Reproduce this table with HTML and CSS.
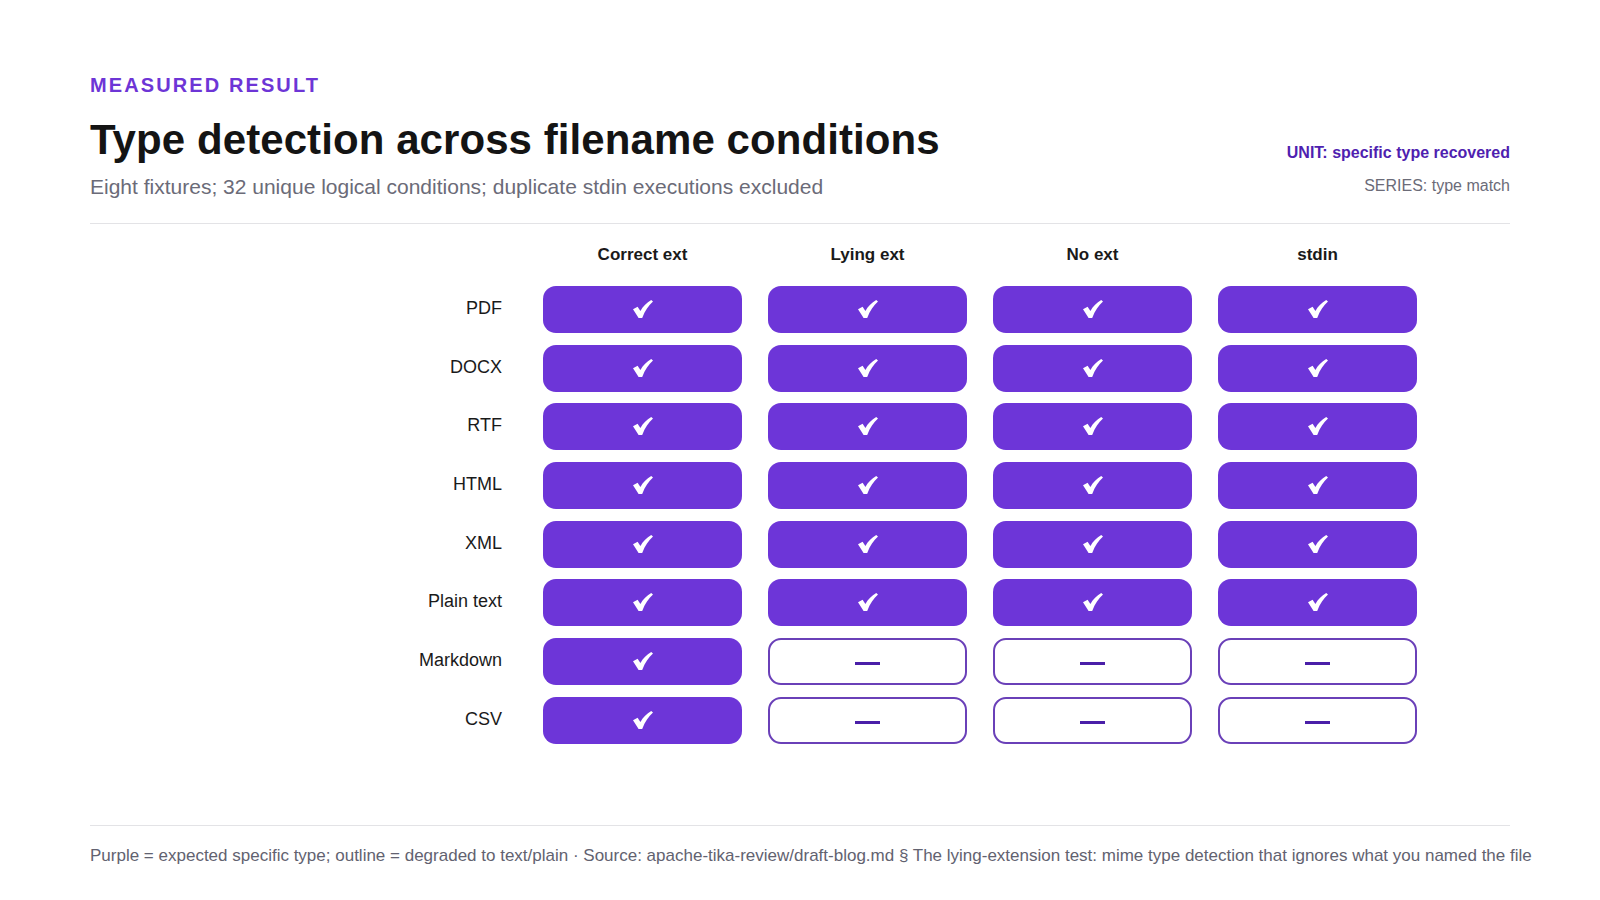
FILE: index.html
```html
<!DOCTYPE html>
<html lang="en">
<head>
<meta charset="utf-8">
<title>Type detection across filename conditions</title>
<link rel="stylesheet" href="styles.css">
</head>
<body>
<div class="page">
  <header class="head">
    <div class="head-left">
      <div class="eyebrow">MEASURED RESULT</div>
      <h1 class="title">Type detection across filename conditions</h1>
      <div class="subtitle">Eight fixtures; 32 unique logical conditions; duplicate stdin executions excluded</div>
    </div>
    <div class="head-right">
      <div class="unit">UNIT: specific type recovered</div>
      <div class="series">SERIES: type match</div>
    </div>
  </header>

  <div class="matrix">
    <div class="corner"></div>
    <div class="colhead">Correct ext</div>
    <div class="colhead">Lying ext</div>
    <div class="colhead">No ext</div>
    <div class="colhead">stdin</div>

    <div class="rowlabel">PDF</div>
    <div class="cell on"><svg class="chk" viewBox="0 0 20 18"><path d="M0 9.2 L4.6 6.8 L7.4 11 C10.2 6.2 13.6 2.6 18.2 0 L20 1.6 C15.6 5.4 12 10.8 9.2 18 L5.6 18 Z"/></svg></div>
    <div class="cell on"><svg class="chk" viewBox="0 0 20 18"><path d="M0 9.2 L4.6 6.8 L7.4 11 C10.2 6.2 13.6 2.6 18.2 0 L20 1.6 C15.6 5.4 12 10.8 9.2 18 L5.6 18 Z"/></svg></div>
    <div class="cell on"><svg class="chk" viewBox="0 0 20 18"><path d="M0 9.2 L4.6 6.8 L7.4 11 C10.2 6.2 13.6 2.6 18.2 0 L20 1.6 C15.6 5.4 12 10.8 9.2 18 L5.6 18 Z"/></svg></div>
    <div class="cell on"><svg class="chk" viewBox="0 0 20 18"><path d="M0 9.2 L4.6 6.8 L7.4 11 C10.2 6.2 13.6 2.6 18.2 0 L20 1.6 C15.6 5.4 12 10.8 9.2 18 L5.6 18 Z"/></svg></div>

    <div class="rowlabel">DOCX</div>
    <div class="cell on"><svg class="chk" viewBox="0 0 20 18"><path d="M0 9.2 L4.6 6.8 L7.4 11 C10.2 6.2 13.6 2.6 18.2 0 L20 1.6 C15.6 5.4 12 10.8 9.2 18 L5.6 18 Z"/></svg></div>
    <div class="cell on"><svg class="chk" viewBox="0 0 20 18"><path d="M0 9.2 L4.6 6.8 L7.4 11 C10.2 6.2 13.6 2.6 18.2 0 L20 1.6 C15.6 5.4 12 10.8 9.2 18 L5.6 18 Z"/></svg></div>
    <div class="cell on"><svg class="chk" viewBox="0 0 20 18"><path d="M0 9.2 L4.6 6.8 L7.4 11 C10.2 6.2 13.6 2.6 18.2 0 L20 1.6 C15.6 5.4 12 10.8 9.2 18 L5.6 18 Z"/></svg></div>
    <div class="cell on"><svg class="chk" viewBox="0 0 20 18"><path d="M0 9.2 L4.6 6.8 L7.4 11 C10.2 6.2 13.6 2.6 18.2 0 L20 1.6 C15.6 5.4 12 10.8 9.2 18 L5.6 18 Z"/></svg></div>

    <div class="rowlabel">RTF</div>
    <div class="cell on"><svg class="chk" viewBox="0 0 20 18"><path d="M0 9.2 L4.6 6.8 L7.4 11 C10.2 6.2 13.6 2.6 18.2 0 L20 1.6 C15.6 5.4 12 10.8 9.2 18 L5.6 18 Z"/></svg></div>
    <div class="cell on"><svg class="chk" viewBox="0 0 20 18"><path d="M0 9.2 L4.6 6.8 L7.4 11 C10.2 6.2 13.6 2.6 18.2 0 L20 1.6 C15.6 5.4 12 10.8 9.2 18 L5.6 18 Z"/></svg></div>
    <div class="cell on"><svg class="chk" viewBox="0 0 20 18"><path d="M0 9.2 L4.6 6.8 L7.4 11 C10.2 6.2 13.6 2.6 18.2 0 L20 1.6 C15.6 5.4 12 10.8 9.2 18 L5.6 18 Z"/></svg></div>
    <div class="cell on"><svg class="chk" viewBox="0 0 20 18"><path d="M0 9.2 L4.6 6.8 L7.4 11 C10.2 6.2 13.6 2.6 18.2 0 L20 1.6 C15.6 5.4 12 10.8 9.2 18 L5.6 18 Z"/></svg></div>

    <div class="rowlabel">HTML</div>
    <div class="cell on"><svg class="chk" viewBox="0 0 20 18"><path d="M0 9.2 L4.6 6.8 L7.4 11 C10.2 6.2 13.6 2.6 18.2 0 L20 1.6 C15.6 5.4 12 10.8 9.2 18 L5.6 18 Z"/></svg></div>
    <div class="cell on"><svg class="chk" viewBox="0 0 20 18"><path d="M0 9.2 L4.6 6.8 L7.4 11 C10.2 6.2 13.6 2.6 18.2 0 L20 1.6 C15.6 5.4 12 10.8 9.2 18 L5.6 18 Z"/></svg></div>
    <div class="cell on"><svg class="chk" viewBox="0 0 20 18"><path d="M0 9.2 L4.6 6.8 L7.4 11 C10.2 6.2 13.6 2.6 18.2 0 L20 1.6 C15.6 5.4 12 10.8 9.2 18 L5.6 18 Z"/></svg></div>
    <div class="cell on"><svg class="chk" viewBox="0 0 20 18"><path d="M0 9.2 L4.6 6.8 L7.4 11 C10.2 6.2 13.6 2.6 18.2 0 L20 1.6 C15.6 5.4 12 10.8 9.2 18 L5.6 18 Z"/></svg></div>

    <div class="rowlabel">XML</div>
    <div class="cell on"><svg class="chk" viewBox="0 0 20 18"><path d="M0 9.2 L4.6 6.8 L7.4 11 C10.2 6.2 13.6 2.6 18.2 0 L20 1.6 C15.6 5.4 12 10.8 9.2 18 L5.6 18 Z"/></svg></div>
    <div class="cell on"><svg class="chk" viewBox="0 0 20 18"><path d="M0 9.2 L4.6 6.8 L7.4 11 C10.2 6.2 13.6 2.6 18.2 0 L20 1.6 C15.6 5.4 12 10.8 9.2 18 L5.6 18 Z"/></svg></div>
    <div class="cell on"><svg class="chk" viewBox="0 0 20 18"><path d="M0 9.2 L4.6 6.8 L7.4 11 C10.2 6.2 13.6 2.6 18.2 0 L20 1.6 C15.6 5.4 12 10.8 9.2 18 L5.6 18 Z"/></svg></div>
    <div class="cell on"><svg class="chk" viewBox="0 0 20 18"><path d="M0 9.2 L4.6 6.8 L7.4 11 C10.2 6.2 13.6 2.6 18.2 0 L20 1.6 C15.6 5.4 12 10.8 9.2 18 L5.6 18 Z"/></svg></div>

    <div class="rowlabel">Plain text</div>
    <div class="cell on"><svg class="chk" viewBox="0 0 20 18"><path d="M0 9.2 L4.6 6.8 L7.4 11 C10.2 6.2 13.6 2.6 18.2 0 L20 1.6 C15.6 5.4 12 10.8 9.2 18 L5.6 18 Z"/></svg></div>
    <div class="cell on"><svg class="chk" viewBox="0 0 20 18"><path d="M0 9.2 L4.6 6.8 L7.4 11 C10.2 6.2 13.6 2.6 18.2 0 L20 1.6 C15.6 5.4 12 10.8 9.2 18 L5.6 18 Z"/></svg></div>
    <div class="cell on"><svg class="chk" viewBox="0 0 20 18"><path d="M0 9.2 L4.6 6.8 L7.4 11 C10.2 6.2 13.6 2.6 18.2 0 L20 1.6 C15.6 5.4 12 10.8 9.2 18 L5.6 18 Z"/></svg></div>
    <div class="cell on"><svg class="chk" viewBox="0 0 20 18"><path d="M0 9.2 L4.6 6.8 L7.4 11 C10.2 6.2 13.6 2.6 18.2 0 L20 1.6 C15.6 5.4 12 10.8 9.2 18 L5.6 18 Z"/></svg></div>

    <div class="rowlabel">Markdown</div>
    <div class="cell on"><svg class="chk" viewBox="0 0 20 18"><path d="M0 9.2 L4.6 6.8 L7.4 11 C10.2 6.2 13.6 2.6 18.2 0 L20 1.6 C15.6 5.4 12 10.8 9.2 18 L5.6 18 Z"/></svg></div>
    <div class="cell off"><span class="dash"></span></div>
    <div class="cell off"><span class="dash"></span></div>
    <div class="cell off"><span class="dash"></span></div>

    <div class="rowlabel">CSV</div>
    <div class="cell on"><svg class="chk" viewBox="0 0 20 18"><path d="M0 9.2 L4.6 6.8 L7.4 11 C10.2 6.2 13.6 2.6 18.2 0 L20 1.6 C15.6 5.4 12 10.8 9.2 18 L5.6 18 Z"/></svg></div>
    <div class="cell off"><span class="dash"></span></div>
    <div class="cell off"><span class="dash"></span></div>
    <div class="cell off"><span class="dash"></span></div>
  </div>

  <footer class="foot">
    <div class="foot-text">Purple = expected specific type; outline = degraded to text/plain · Source: apache-tika-review/draft-blog.md § The lying-extension test: mime type detection that ignores what you named the file</div>
  </footer>
</div>
</body>
</html>
```

FILE: styles.css
```css
* { box-sizing: border-box; }

html, body {
  margin: 0;
  padding: 0;
  background: #ffffff;
}

body {
  font-family: "Liberation Sans", Arial, Helvetica, sans-serif;
  color: #1a1a1a;
  width: 1600px;
  height: 900px;
  overflow: hidden;
}

.page {
  padding: 73px 90px 0 90px;
  display: flex;
  flex-direction: column;
}

.head {
  display: flex;
  justify-content: space-between;
  align-items: flex-end;
  padding-bottom: 23px;
  border-bottom: 1px solid #e3e3e6;
}

.head-left {
  display: flex;
  flex-direction: column;
}

.eyebrow {
  font-size: 20px;
  line-height: 24px;
  font-weight: 700;
  letter-spacing: 2.1px;
  color: #6d35d6;
}

.title {
  margin: 18px 0 0 0;
  font-size: 42px;
  line-height: 50px;
  font-weight: 700;
  letter-spacing: 0.08px;
  color: #141414;
}

.subtitle {
  margin-top: 9px;
  font-size: 21px;
  line-height: 26px;
  color: #6b6b78;
}

.head-right {
  display: flex;
  flex-direction: column;
  align-items: flex-end;
  gap: 13px;
  padding-bottom: 4px;
}

.unit {
  font-size: 16px;
  line-height: 20px;
  font-weight: 700;
  color: #4f1fb0;
}

.series {
  font-size: 16px;
  line-height: 20px;
  color: #6b6b78;
}

.matrix {
  margin-top: 21px;
  display: grid;
  grid-template-columns: 427px repeat(4, 199px);
  grid-template-rows: 29.3px;
  grid-auto-rows: 47px;
  column-gap: 26px;
  row-gap: 11.7px;
}

.colhead {
  align-self: start;
  font-size: 17px;
  line-height: 20px;
  font-weight: 700;
  text-align: center;
  color: #1a1a1a;
}

.rowlabel {
  display: flex;
  align-items: center;
  justify-content: flex-end;
  padding-right: 15px;
  padding-bottom: 2px;
  font-size: 18px;
  color: #1a1a1a;
}

.cell {
  border-radius: 13px;
  display: flex;
  align-items: center;
  justify-content: center;
}

.cell.on {
  background: #6d35d8;
}

.cell.off {
  background: #ffffff;
  border: 2px solid #6a40b8;
}

.chk {
  width: 20px;
  height: 18px;
  margin-top: -1px;
  fill: #ffffff;
}

.dash {
  display: block;
  width: 25px;
  height: 2.5px;
  margin-top: 4px;
  background: #4a1fa8;
}

.foot {
  margin-top: 81px;
  border-top: 1px solid #e3e3e6;
  padding-top: 20px;
}

.foot-text {
  font-size: 17px;
  line-height: 20px;
  color: #626270;
  white-space: nowrap;
}
```
